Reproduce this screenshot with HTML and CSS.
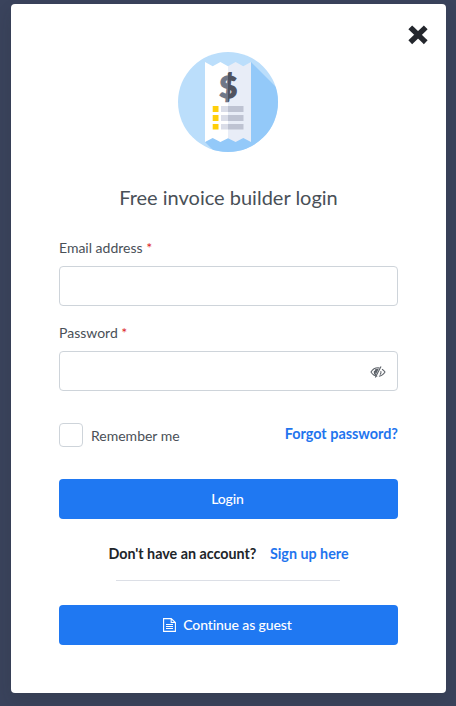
FILE: index.html
```html
<!DOCTYPE html>
<html lang="en">
  <head>
    <meta charset="utf-8">
    <title>Free invoice builder login</title>
    <link rel="stylesheet" href="styles.css">
  </head>
  <body>
    <div class="modal">
      <button type="button" class="close" aria-label="Close">
        <svg width="20" height="20" viewBox="0 0 20 20">
          <path d="M4.2 4.2 15.8 15.4M15.8 4.2 4.2 15.4" />
        </svg>
      </button>

      <svg class="logo" width="100" height="100" viewBox="0 0 100 100">
        <defs>
          <clipPath id="disc"><circle cx="50" cy="50" r="50" /></clipPath>
          <linearGradient id="fold">
            <stop offset="50%" stop-color="#707787" />
            <stop offset="50%" stop-color="#50535f" />
          </linearGradient>
        </defs>
        <g clip-path="url(#disc)">
          <rect width="100" height="100" fill="#bbdefb" />
          <path d="M73 10 110 47V110H47L27 90 50 60Z" fill="#93c9f9" />
          <path d="M27 10l7.7 4.3 7.7-4.3 7.6 4.3v71.9L42.4 90l-7.7-4-7.7 4z" fill="#fff" />
          <path d="M50 14.3l7.6-4.3 7.7 4.3L73 10v80l-7.7-4-7.7 4-7.6-3.8z" fill="#e8edf7" />
          <path d="M34.7 54h5.8v6h-5.8zM34.7 63h5.8v6h-5.8zM34.7 72h5.8v5.6h-5.8z" fill="#ffcf0a" />
          <path d="M43 54h7v6h-7zM43 63h7v6h-7zM43 72h7v5.6h-7z" fill="#dadde8" />
          <path d="M50 54h15.500v6H50zM50 63h15.500v6H50zM50 72h15.500v5.6H50z" fill="#bec3d2" />
          <text class="logo-sign" x="50.3" y="45.5" text-anchor="middle" fill="url(#fold)" stroke="url(#fold)">$</text>
        </g>
      </svg>

      <h1>Free invoice builder login</h1>

      <form>
        <label class="field-label" for="email">Email address <span class="required">*</span></label>
        <input type="email" id="email" class="field">

        <label class="field-label" for="password">Password <span class="required">*</span></label>
        <div class="password">
          <input type="password" id="password" class="field">
          <svg class="eye" width="16" height="12" viewBox="0 0 16 12">
            <path d="M7.3 10.2C4.5 10 2.400 8.300 1 6 2.600 3.400 5 1.800 8 1.800c.6 0 1.100.1 1.600.2M12 3.200c1.200.7 2.200 1.700 3 2.800-1.400 2.300-3.500 3.900-6.100 4.200" />
            <path d="M4.500 4.800c-.5 2 .3 3.600 1.700 4.300M10.800 5.100c.5 1.300.2 2.600-.8 3.600" />
            <path class="pupil" d="M5.200 3.200 8.900 2.600 6 8.200C4.800 7 4.600 4.700 5.200 3.200Z" />
            <path d="M11 .6 5.300 11.400" />
          </svg>
        </div>

        <div class="options">
          <label class="remember">
            <input type="checkbox" class="checkbox">
            Remember me
          </label>
          <a href="#" class="forgot">Forgot password?</a>
        </div>

        <button type="submit" class="btn">Login</button>
      </form>

      <p class="signup">Don't have an account? <a href="#">Sign up here</a></p>
      <hr>

      <button type="button" class="btn">
        <svg class="file" width="13" height="14" viewBox="0 0 13 14">
          <path d="M.6.600H8.200L12.400 4.500V13.400H.6ZM8.200.600V4.500H12.400M3 6.500h7M3 8.500h7M3 10.500h7" />
        </svg>
        Continue as guest
      </button>
    </div>
  </body>
</html>
```
FILE: styles.css
```css
* {
  box-sizing: border-box;
}
body {
  margin: 0;
  padding: 4px 10px 0 11px;
  height: 706px;
  overflow: hidden;
  background: #3a435c;
  font-family: Lato, "Liberation Sans", sans-serif;
  font-size: 14px;
  font-variant-ligatures: none;
  color: #495057;
}
.modal {
  position: relative;
  height: 689px;
  padding: 48px 48px 0;
  background: #fff;
  border-radius: 4px;
  box-shadow: 0 8px 16px rgba(33, 37, 41, 0.15);
}
.close {
  position: absolute;
  top: 21px;
  right: 18px;
  width: 20px;
  height: 20px;
  padding: 0;
  border: none;
  background: none;
  cursor: pointer;
}
.close svg {
  display: block;
  fill: none;
  stroke: #24272d;
  stroke-width: 5.4;
  stroke-linecap: square;
}
.logo {
  display: block;
  margin: 0 auto 0 119px;
}
.logo-sign {
  font-family: Lato, sans-serif;
  font-weight: 900;
  font-size: 31px;
  stroke-width: 1.3;
}
h1 {
  margin: 33px 0 29px;
  font-size: 20px;
  font-weight: 400;
  line-height: 24px;
  text-align: center;
}
.field-label {
  display: block;
  margin-bottom: 8px;
  line-height: 20px;
}
.required {
  color: #dc1f1f;
}
.field {
  display: block;
  width: 100%;
  height: 40px;
  margin-bottom: 17px;
  padding: 0 12px;
  border: 1px solid #ced4da;
  border-radius: 4px;
  font: inherit;
}
.password {
  position: relative;
  margin-bottom: 32px;
}
.password .field {
  margin: 0;
}
.eye {
  position: absolute;
  top: 15px;
  right: 12px;
  fill: none;
  stroke: #5c6168;
  stroke-width: 1.1;
}
.pupil {
  fill: #5c6168;
  stroke: none;
}
.options {
  display: flex;
  justify-content: space-between;
  height: 24px;
  margin-bottom: 32px;
}
.remember {
  display: flex;
  align-items: center;
  gap: 8px;
  padding-top: 1px;
}
.checkbox {
  appearance: none;
  width: 24px;
  height: 24px;
  margin: -1px 0 0;
  border: 1px solid #ced4da;
  border-radius: 4px;
}
a {
  color: #1f75ee;
  font-weight: 700;
  text-decoration: none;
}
.forgot {
  font-size: 14.4px;
  line-height: 22px;
}
.btn {
  display: flex;
  align-items: center;
  justify-content: center;
  gap: 7px;
  width: 100%;
  height: 40px;
  padding: 0 2px 1px 0;
  border: none;
  border-radius: 4px;
  background: #1f78f2;
  color: #fff;
  font: inherit;
  font-weight: 500;
  letter-spacing: -0.1px;
  cursor: pointer;
}
.file {
  fill: none;
  stroke: #fff;
  stroke-width: 1.1;
}
.signup {
  margin: 24px 0 16px;
  color: #212529;
  font-size: 14.3px;
  font-weight: 700;
  line-height: 21px;
  text-align: center;
}
.signup a {
  margin-left: 10px;
}
hr {
  width: 224px;
  margin: 0 58px 24px 57px;
  border: none;
  border-top: 1px solid #dcdfe6;
}
```
